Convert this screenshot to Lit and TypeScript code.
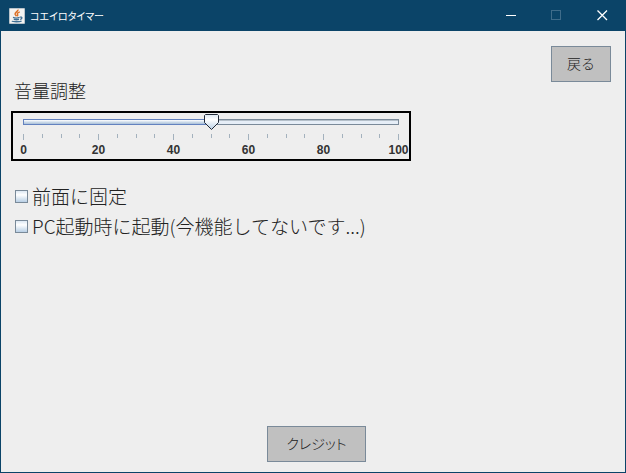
import { LitElement, html, css, svg } from "lit";
import { customElement, state } from "lit/decorators.js";

@customElement("title-bar")
class TitleBar extends LitElement {
  static styles = css`
    :host {
      display: flex;
      align-items: center;
      height: 31px;
      padding-left: 9px;
      padding-right: 1px;
      background: #0b4468;
      color: #fff;
    }
    .logo {
      width: 16px;
      height: 16px;
      flex: none;
    }
    .title {
      flex: 1;
      margin: 0 0 0 5px;
      font: 400 10px/16px "Noto Sans CJK JP", sans-serif;
      font-feature-settings: "palt";
      white-space: nowrap;
    }
    .control {
      display: flex;
      align-items: center;
      justify-content: center;
      width: 46px;
      height: 31px;
      padding: 0;
      border: 0;
      background: none;
      color: inherit;
    }
    .control:disabled {
      color: #3f6c8a;
    }
    .glyph {
      width: 11px;
      height: 11px;
      fill: none;
      stroke: currentColor;
    }
  `;

  private control(label: string, shape: unknown, disabled = false) {
    return html`<button class="control" aria-label=${label} ?disabled=${disabled}>
      <svg class="glyph" viewBox="0 0 11 11">${shape}</svg>
    </button>`;
  }

  render() {
    return html`
      <svg class="logo" viewBox="0 0 16 16" fill="none" aria-hidden="true">
        <rect width="16" height="16" rx="1" fill="#b9c3ca" />
        <rect x="1" y="1" width="14" height="14" fill="#f3f3f1" />
        <path d="M8.8 1.6C9.6 3.4 5.6 4.4 6.2 6.2C6.5 7 7.2 7.4 7.5 8.2" stroke="#dd7228" stroke-width="1.7" />
        <path d="M10.8 3.8C8.6 4.6 8 5.4 8.6 6.3C9 7 8.8 7.6 8.3 8.2" stroke="#dd7228" stroke-width="1.4" />
        <path d="M4 9.4C5.5 10 9 10 10.6 9.3M4.8 11.3C6.4 11.8 8.6 11.8 10 11.3M11 9.2C13.4 8.4 13.6 10.6 11.2 11.5M3 13C3.6 14 11 14 12.6 13" stroke="#3f6f93" stroke-width="1.3" />
      </svg>
      <h1 class="title">コエイロタイマー</h1>
      ${this.control("最小化", svg`<path d="M1 5.5H11" />`)}
      ${this.control("最大化", svg`<rect x="0.5" y="0.5" width="9" height="9" />`, true)}
      ${this.control("閉じる", svg`<path d="M0.5 0.5L10 10M10 0.5L0.5 10" stroke-width="1.3" />`)}
    `;
  }
}

@customElement("volume-slider")
class VolumeSlider extends LitElement {
  @state() private value = 50;

  static styles = css`
    :host {
      display: block;
      box-sizing: border-box;
      width: 100%;
      max-width: 400px;
      height: 50px;
      padding: 0 10px;
      border: 2px solid #000;
      font: 700 12px/14px "Liberation Sans", Arial, sans-serif;
      color: #333;
    }
    .rail {
      display: grid;
      align-items: center;
      height: 18px;
    }
    .track,
    .range {
      grid-area: 1 / 1;
    }
    .track {
      box-sizing: border-box;
      height: 6px;
      border: 1px solid #7a8a99;
      background: linear-gradient(#b5c0ca 1px, #e6eef7 1px);
    }
    .fill {
      box-sizing: border-box;
      height: 6px;
      margin: -1px 0 0 -1px;
      border: 1px solid #6382bf;
      background: linear-gradient(#fff, #c8d8e8 60%, #a9bfd8);
    }
    .range {
      appearance: none;
      height: 18px;
      margin: 0 -7px;
      background: none;
    }
    .range::-webkit-slider-thumb {
      appearance: none;
      width: 15px;
      height: 16px;
      border: 0;
      background: url("data:image/svg+xml,%3Csvg xmlns='http://www.w3.org/2000/svg' width='15' height='16'%3E%3Cdefs%3E%3ClinearGradient id='g' x2='0' y2='1'%3E%3Cstop stop-color='%23dde8f3'/%3E%3Cstop offset='.35' stop-color='%23fff'/%3E%3Cstop offset='1' stop-color='%23b8cfe5'/%3E%3C/linearGradient%3E%3C/defs%3E%3Cpath d='M1.5 .5H13.5L14.5 1.5V8.5L7.5 15.5L.5 8.5V1.5Z' fill='url(%23g)' stroke='%23222b38'/%3E%3C/svg%3E");
    }
    .scale {
      display: flex;
      justify-content: space-between;
      margin-top: 3px;
    }
    .tick {
      display: flex;
      flex-direction: column;
      align-items: center;
      width: 1px;
    }
    .mark {
      flex: none;
      width: 1px;
      height: 4px;
      margin-bottom: 4px;
      background: #a3b1bd;
    }
    .major .mark {
      height: 6px;
      margin-bottom: 3px;
    }
  `;

  render() {
    const ticks = Array.from({ length: 21 }, (_, i) => i * 5);
    return html`
      <div class="rail">
        <div class="track"><div class="fill" style="width:${this.value}%"></div></div>
        <input
          class="range"
          type="range"
          min="0"
          max="100"
          aria-label="音量調整"
          .value=${String(this.value)}
          @input=${(e: Event) => (this.value = Number((e.target as HTMLInputElement).value))}
        />
      </div>
      <div class="scale">
        ${ticks.map((t) =>
          t % 20 === 0
            ? html`<div class="tick major"><span class="mark"></span><span>${t}</span></div>`
            : html`<div class="tick"><span class="mark"></span></div>`
        )}
      </div>
    `;
  }
}

@customElement("app-root")
class AppRoot extends LitElement {
  static styles = css`
    :host {
      display: flex;
      flex-direction: column;
      box-sizing: border-box;
      min-height: 100vh;
      background: #eee;
      color: #222;
      font: 300 19px/30px "Noto Sans CJK JP", sans-serif;
    }
    .body {
      flex: 1;
      display: flex;
      flex-direction: column;
      padding: 15px 14px 10px 10px;
      border: 1px solid #0b4468;
      border-top: 0;
    }
    .button {
      height: 36px;
      padding: 0 15px 2px;
      border: 1px solid #7a8a99;
      background: #c0c0c0;
      color: #222;
      font: 300 14px/20px "Noto Sans CJK JP", sans-serif;
    }
    .back {
      align-self: flex-end;
    }
    .credits {
      align-self: center;
      margin-top: auto;
      margin-left: 11px;
      padding: 0 18px 2px;
      font-feature-settings: "palt";
    }
    .heading {
      margin: 0 3px 12px;
      font: inherit;
      font-size: 18px;
      line-height: 17px;
    }
    .options {
      margin: 20px 4px;
    }
    .option {
      display: flex;
      align-items: center;
      gap: 4px;
    }
    .box {
      appearance: none;
      flex: none;
      width: 13px;
      height: 13px;
      margin: 0;
      border: 1px solid #7a8a99;
      background: linear-gradient(#dde8f3, #fff 35%, #b8cfe5);
    }
    .box:checked {
      background: #6382bf;
    }
  `;

  render() {
    return html`
      <title-bar></title-bar>
      <main class="body">
        <button class="button back">戻る</button>
        <h2 class="heading">音量調整</h2>
        <volume-slider></volume-slider>
        <div class="options">
          <label class="option"><input class="box" type="checkbox" />前面に固定</label>
          <label class="option"><input class="box" type="checkbox" />PC起動時に起動(今機能してないです...)</label>
        </div>
        <button class="button credits">クレジット</button>
      </main>
    `;
  }
}
